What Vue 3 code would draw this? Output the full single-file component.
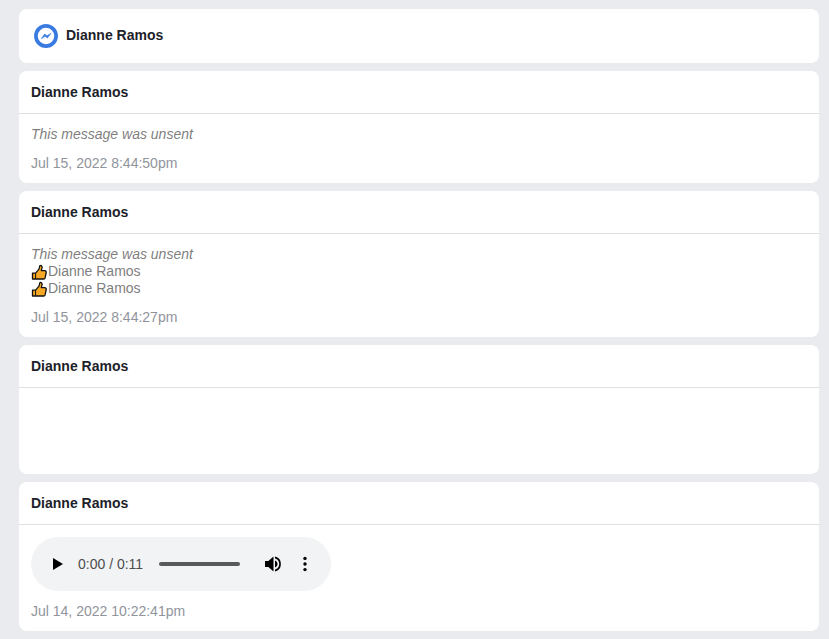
<script setup>
const name = 'Dianne Ramos'
</script>

<template>
  <main class="page">
    <section class="card top">
      <svg class="logo" viewBox="0 0 24 24" width="24" height="24" aria-hidden="true">
        <circle cx="12" cy="12" r="10.1" fill="#fff" stroke="#3a7be2" stroke-width="3.7" />
        <path d="M7.2 14.8 10.7 10 13 11.8 16.9 9.3 13.4 14.1 11.1 12.3Z" fill="#3a7be2" stroke="#3a7be2" stroke-width=".6" stroke-linejoin="round" />
      </svg>
      <strong class="name">{{ name }}</strong>
    </section>

    <section class="card">
      <header class="head">{{ name }}</header>
      <div class="body">
        <p class="msg"><em>This message was unsent</em></p>
        <p class="date">Jul 15, 2022 8:44:50pm</p>
      </div>
    </section>

    <section class="card">
      <header class="head">{{ name }}</header>
      <div class="body">
        <p class="msg"><em>This message was unsent</em></p>
        <p v-for="n in 2" :key="n" class="msg like">
          <svg class="thumb" viewBox="0 0 16 16" width="16" height="16" aria-hidden="true">
            <path d="M1.5 15V9.2H4.6L8 5.2 8.9 1.6C10.4 1 11.6 2.4 10.9 4.4L10.3 6.6H13.6C15 6.6 15.4 7.9 15.1 9L14.1 13.9C13.9 14.7 13.4 15 12.6 15Z" fill="#f9a825" stroke="#111" stroke-width="1.3" stroke-linejoin="round" />
            <path d="M4.6 9.2V15" fill="none" stroke="#111" stroke-width="1" />
          </svg>{{ name }}
        </p>
        <p class="date">Jul 15, 2022 8:44:27pm</p>
      </div>
    </section>

    <section class="card">
      <header class="head">{{ name }}</header>
      <div class="body blank"></div>
    </section>

    <section class="card">
      <header class="head">{{ name }}</header>
      <div class="body">
        <div class="player">
          <svg class="play" viewBox="0 0 12 14" width="12" height="14" aria-hidden="true"><path d="M1 1v12l10-6z" fill="#000" /></svg>
          <span class="time">0:00 / 0:11</span>
          <span class="track"></span>
          <svg class="vol" viewBox="0 0 17 16" width="17" height="16" aria-hidden="true">
            <path d="M0 5v6h3.4L8.5 15.6V.4L3.4 5H0z" fill="#000" />
            <path d="M10 4.4v7.2a3.8 3.8 0 0 0 0-7.2z" fill="#000" />
            <path d="M10 .6v1.9a5.7 5.7 0 0 1 0 11v1.9a7.6 7.6 0 0 0 0-14.8z" fill="#000" />
          </svg>
          <svg class="more" viewBox="0 0 4 16" width="4" height="16" aria-hidden="true">
            <circle cx="2" cy="2.4" r="1.7" fill="#000" /><circle cx="2" cy="8" r="1.7" fill="#000" /><circle cx="2" cy="13.6" r="1.7" fill="#000" />
          </svg>
        </div>
        <p class="date audio-date">Jul 14, 2022 10:22:41pm</p>
      </div>
    </section>
  </main>
</template>

<style>
html, body { margin: 0; background: #e9ebee; }
</style>

<style scoped>
.page {
  display: flex;
  flex-direction: column;
  gap: 8px;
  width: 800px;
  margin-left: 19px;
  padding: 9px 0 8px;
  font: 14px/17px "Liberation Sans", Arial, sans-serif;
}
.card { background: #fff; border-radius: 8px; overflow: hidden; }
.top { display: flex; align-items: center; gap: 8px; height: 54px; padding-left: 15px; box-sizing: border-box; }
.logo { flex: none; }
.name { color: #1d2129; font-weight: 700; margin-bottom: 2px; }
.head {
  height: 42px;
  box-sizing: border-box;
  padding: 13px 12px 0;
  color: #1d2129;
  font-weight: 700;
}
.body { border-top: 1px solid #dddfe2; padding: 12px 12px 11px; }
.blank { height: 86px; padding: 0; box-sizing: content-box; }
.msg { margin: 0; color: #7f7f7f; height: 17px; }
.like { display: flex; align-items: center; }
.thumb { flex: none; margin: 0 1px 0 0; }
.date { margin: 12px 0 0; color: #90949c; }
.player {
  display: flex;
  align-items: center;
  width: 300px;
  height: 54px;
  padding-left: 21px;
  box-sizing: border-box;
  border-radius: 27px;
  background: #f1f3f4;
}
.play { flex: none; }
.time { margin-left: 14px; width: 65px; color: #4d4d4d; white-space: nowrap; }
.track { margin-left: 16px; width: 81px; height: 4px; border-radius: 2px; background: #595959; }
.vol { margin-left: 25px; flex: none; }
.more { margin-left: 21px; flex: none; }
.audio-date { margin-top: 12px; }
</style>
